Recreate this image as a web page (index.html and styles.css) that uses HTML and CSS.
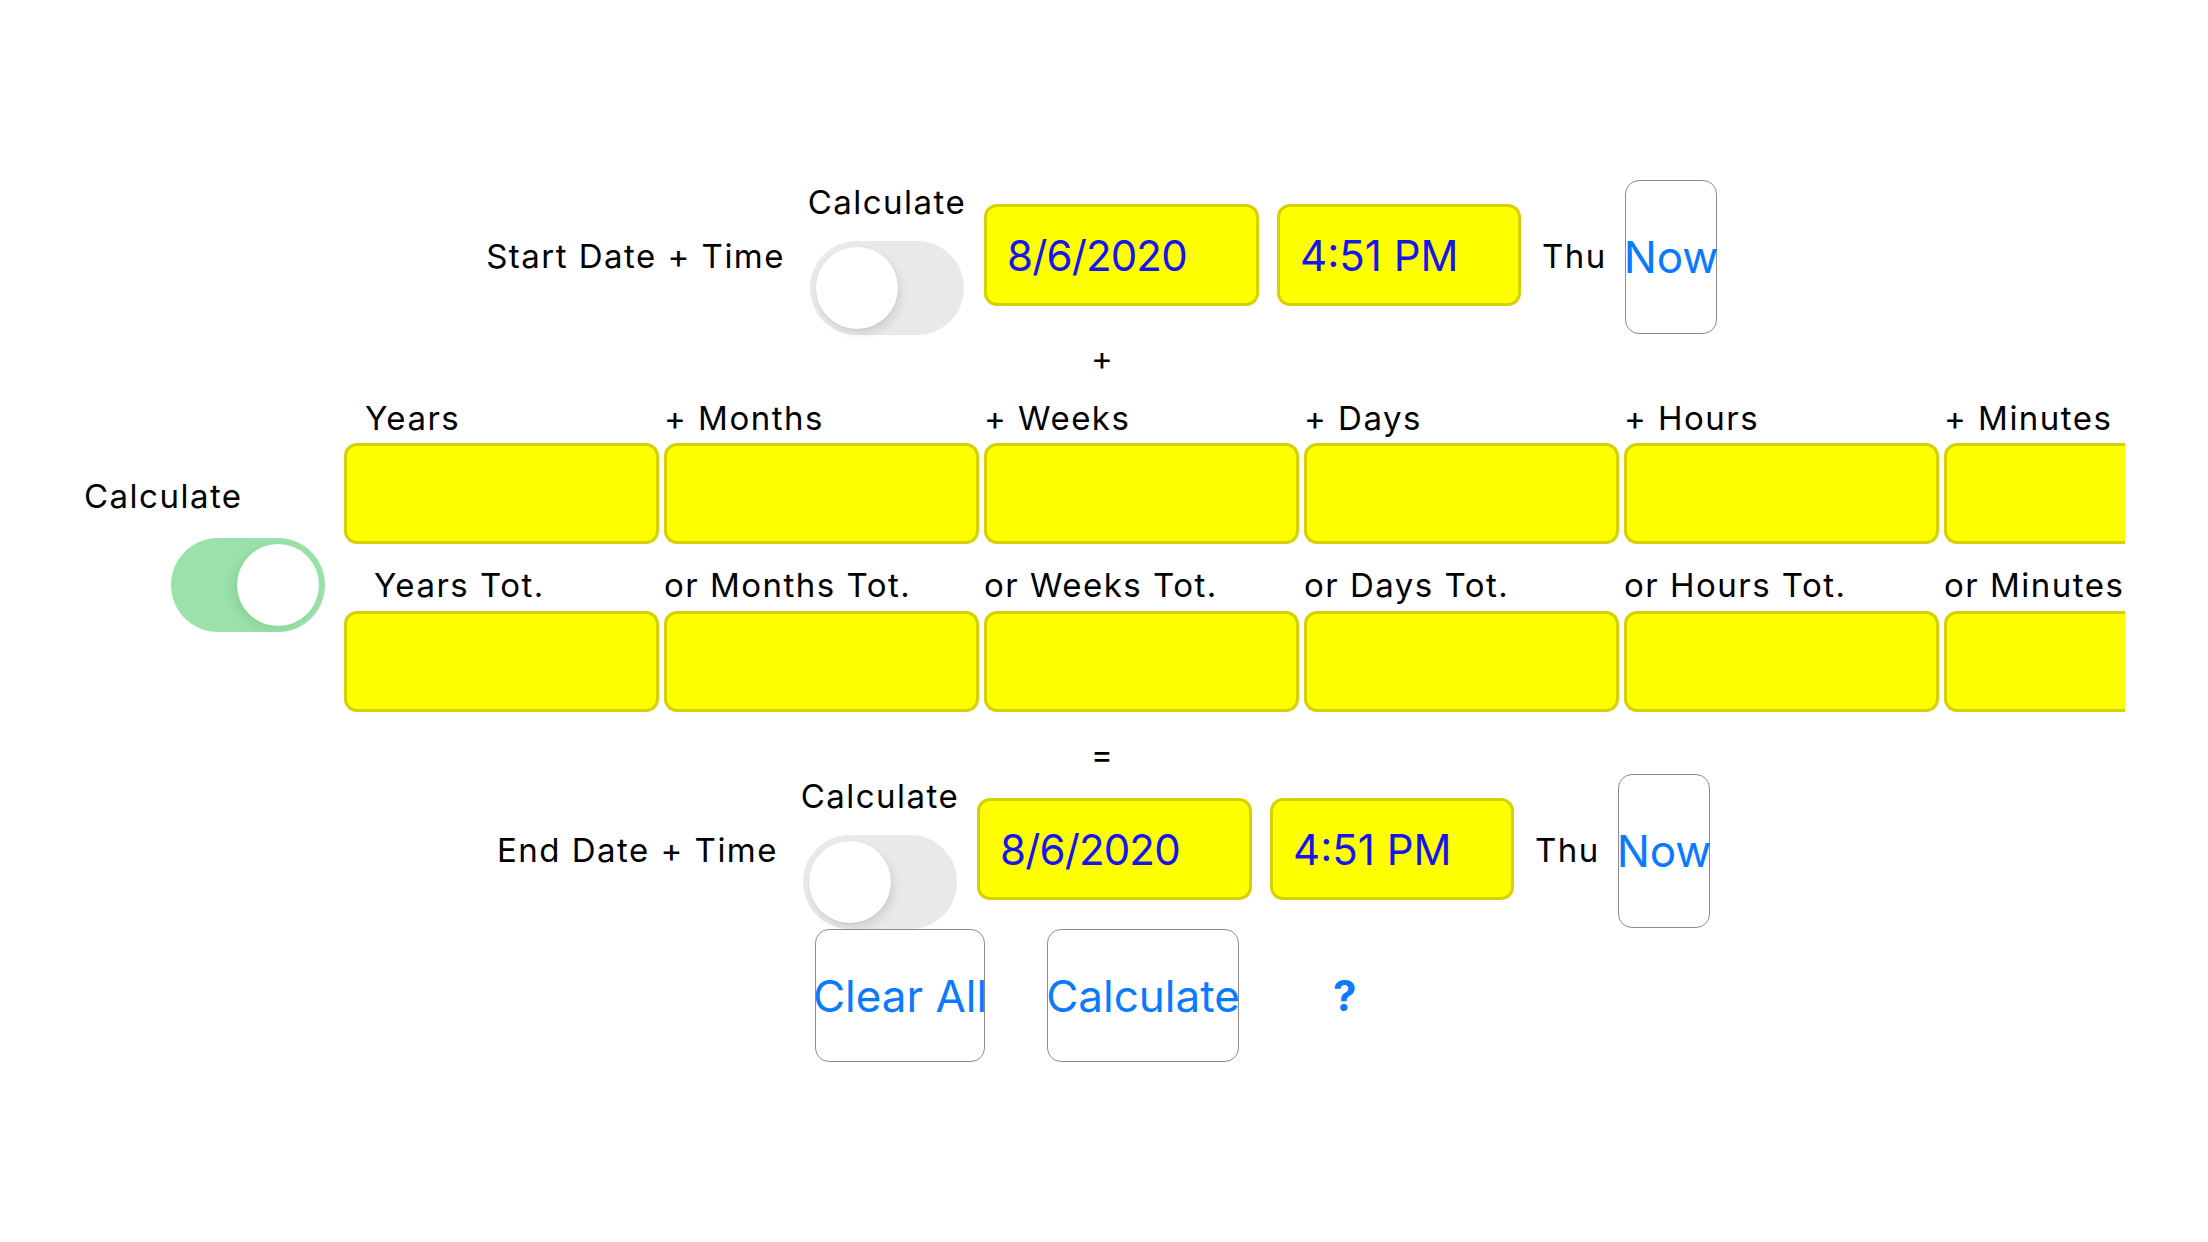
FILE: index.html
```html
<!DOCTYPE html>
<html lang="en">
<head>
<meta charset="utf-8">
<title>Date Calculator</title>
<link rel="stylesheet" href="styles.css">
</head>
<body>
<main class="page">
  <section class="dt-row dt-row--start">
    <div class="dt-label">Start Date + Time</div>
    <div class="calc-col">
      <div class="calc-label">Calculate</div>
      <div class="toggle"><span class="thumb"></span></div>
    </div>
    <div class="field field--date">8/6/2020</div>
    <div class="field field--time">4:51 PM</div>
    <div class="weekday">Thu</div>
    <button class="now-btn">Now</button>
  </section>

  <div class="op op--plus">+</div>

  <section class="dur">
    <div class="dur-side">
      <div class="side-label">Calculate</div>
      <div class="toggle toggle--on"><span class="thumb"></span></div>
    </div>
    <div class="dur-grid">
      <div class="g-label g-label--first">Years</div>
      <div class="g-label">+ Months</div>
      <div class="g-label">+ Weeks</div>
      <div class="g-label">+ Days</div>
      <div class="g-label">+ Hours</div>
      <div class="g-label">+ Minutes</div>
      <div class="g-field"></div>
      <div class="g-field"></div>
      <div class="g-field"></div>
      <div class="g-field"></div>
      <div class="g-field"></div>
      <div class="g-field"></div>
      <div class="g-label g-label--tot g-label--first-tot">Years Tot.</div>
      <div class="g-label g-label--tot">or Months Tot.</div>
      <div class="g-label g-label--tot">or Weeks Tot.</div>
      <div class="g-label g-label--tot">or Days Tot.</div>
      <div class="g-label g-label--tot">or Hours Tot.</div>
      <div class="g-label g-label--tot">or Minutes Tot.</div>
      <div class="g-field g-field--tot"></div>
      <div class="g-field g-field--tot"></div>
      <div class="g-field g-field--tot"></div>
      <div class="g-field g-field--tot"></div>
      <div class="g-field g-field--tot"></div>
      <div class="g-field g-field--tot"></div>
    </div>
  </section>

  <div class="op op--eq">=</div>

  <section class="dt-row dt-row--end">
    <div class="dt-label">End Date + Time</div>
    <div class="calc-col">
      <div class="calc-label">Calculate</div>
      <div class="toggle"><span class="thumb"></span></div>
    </div>
    <div class="field field--date">8/6/2020</div>
    <div class="field field--time">4:51 PM</div>
    <div class="weekday">Thu</div>
    <button class="now-btn">Now</button>
  </section>

  <section class="actions">
    <button class="act-btn act-btn--clear">Clear All</button>
    <button class="act-btn act-btn--calc">Calculate</button>
    <span class="help">?</span>
  </section>
</main>
</body>
</html>
```

FILE: styles.css
```css
* {
  box-sizing: border-box;
}

html, body {
  margin: 0;
  padding: 0;
  background: #ffffff;
}

body {
  width: 2208px;
  height: 1242px;
  overflow: hidden;
  font-family: "Inter", "Liberation Sans", sans-serif;
  color: #000000;
}

.page {
  padding-top: 180px;
}

/* ---------- date + time rows ---------- */
.dt-row {
  display: flex;
  align-items: flex-start;
  height: 155px;
}

.dt-row--start {
  padding-left: 385px;
}

.dt-row--end {
  margin-top: 4px;
  padding-left: 378px;
}

.dt-label {
  width: 400px;
  margin-top: 60px;
  font-size: 33px;
  line-height: 32px;
  letter-spacing: 0.045em;
  text-align: right;
  white-space: nowrap;
}

.calc-col {
  width: 158px;
  margin-left: 23px;
  margin-top: 6px;
  display: flex;
  flex-direction: column;
  align-items: center;
}

.calc-label {
  font-size: 33px;
  line-height: 32px;
  letter-spacing: 0.045em;
  white-space: nowrap;
}

.calc-col .toggle {
  margin-top: 23px;
}

.field {
  height: 102px;
  margin-top: 24px;
  margin-left: 18px;
  padding-left: 20px;
  display: flex;
  align-items: center;
  background: #ffff00;
  border: 3px solid #d6d100;
  border-radius: 13px;
  color: #1616ec;
  font-size: 42px;
  white-space: nowrap;
}

.field--date {
  width: 275px;
  letter-spacing: -0.02em;
}

.field--time {
  width: 244px;
}

.weekday {
  width: 62px;
  margin-left: 21px;
  margin-top: 60px;
  font-size: 33px;
  line-height: 32px;
  letter-spacing: 0.045em;
  white-space: nowrap;
}

.now-btn {
  width: 92px;
  height: 154px;
  margin-left: 21px;
  padding: 0;
  display: flex;
  align-items: center;
  justify-content: center;
  background: #ffffff;
  border: 1.5px solid #8c8c8c;
  border-radius: 14px;
  color: #0a7aff;
  font-family: "Inter", "Liberation Sans", sans-serif;
  font-size: 44px;
  white-space: nowrap;
  overflow: visible;
}

/* ---------- toggles ---------- */
.toggle {
  width: 154px;
  height: 94px;
  padding: 6px;
  border-radius: 47px;
  background: #e9e9e9;
  display: flex;
  justify-content: flex-start;
  flex-shrink: 0;
}

.thumb {
  width: 82px;
  height: 82px;
  border-radius: 50%;
  background: #ffffff;
  box-shadow: 3px 5px 10px rgba(0, 0, 0, 0.10), 0 1px 2px rgba(0, 0, 0, 0.06);
}

.toggle--on {
  background: #9ae1ab;
  justify-content: flex-end;
}

.toggle--on .thumb {
  box-shadow: -4px 3px 10px rgba(60, 150, 80, 0.18);
}

/* ---------- operators ---------- */
.op {
  font-size: 33px;
  line-height: 32px;
  text-align: center;
  padding-right: 4px;
}

.op--plus {
  margin-top: 7px;
}

.op--eq {
  margin-top: 26px;
}

/* ---------- duration grid ---------- */
.dur {
  display: flex;
  align-items: flex-start;
  margin-top: 18px;
  padding-left: 84px;
}

.dur-side {
  width: 241px;
  display: flex;
  flex-direction: column;
}

.side-label {
  margin-top: 88px;
  font-size: 33px;
  line-height: 32px;
  letter-spacing: 0.045em;
  white-space: nowrap;
}

.dur-side .toggle {
  margin-top: 26px;
  align-self: flex-end;
}

.dur-grid {
  width: 1781px;
  margin-left: 19px;
  padding-top: 10px;
  overflow: hidden;
  display: grid;
  grid-template-columns: repeat(6, 315px);
  column-gap: 5px;
}

.g-label {
  font-size: 33px;
  line-height: 32px;
  letter-spacing: 0.045em;
  white-space: nowrap;
}

.g-label--first {
  padding-left: 21px;
}

.g-label--tot {
  margin-top: 25px;
}

.g-label--first-tot {
  padding-left: 30px;
}

.g-field {
  height: 101px;
  margin-top: 9px;
  background: #ffff00;
  border: 3px solid #d6d100;
  border-radius: 13px;
}

.g-field--tot {
  margin-top: 10px;
}

/* ---------- actions ---------- */
.actions {
  display: flex;
  align-items: center;
  padding-left: 815px;
}

.act-btn {
  height: 133px;
  padding: 0;
  display: flex;
  align-items: center;
  justify-content: center;
  background: #ffffff;
  border: 1.5px solid #8c8c8c;
  border-radius: 14px;
  color: #0a7aff;
  font-family: "Inter", "Liberation Sans", sans-serif;
  font-size: 44px;
  white-space: nowrap;
  overflow: visible;
}

.act-btn--clear {
  width: 170px;
}

.act-btn--calc {
  width: 192px;
  margin-left: 62px;
}

.help {
  margin-left: 94px;
  color: #0a7aff;
  font-size: 42px;
  font-weight: 700;
  line-height: 42px;
}
```
